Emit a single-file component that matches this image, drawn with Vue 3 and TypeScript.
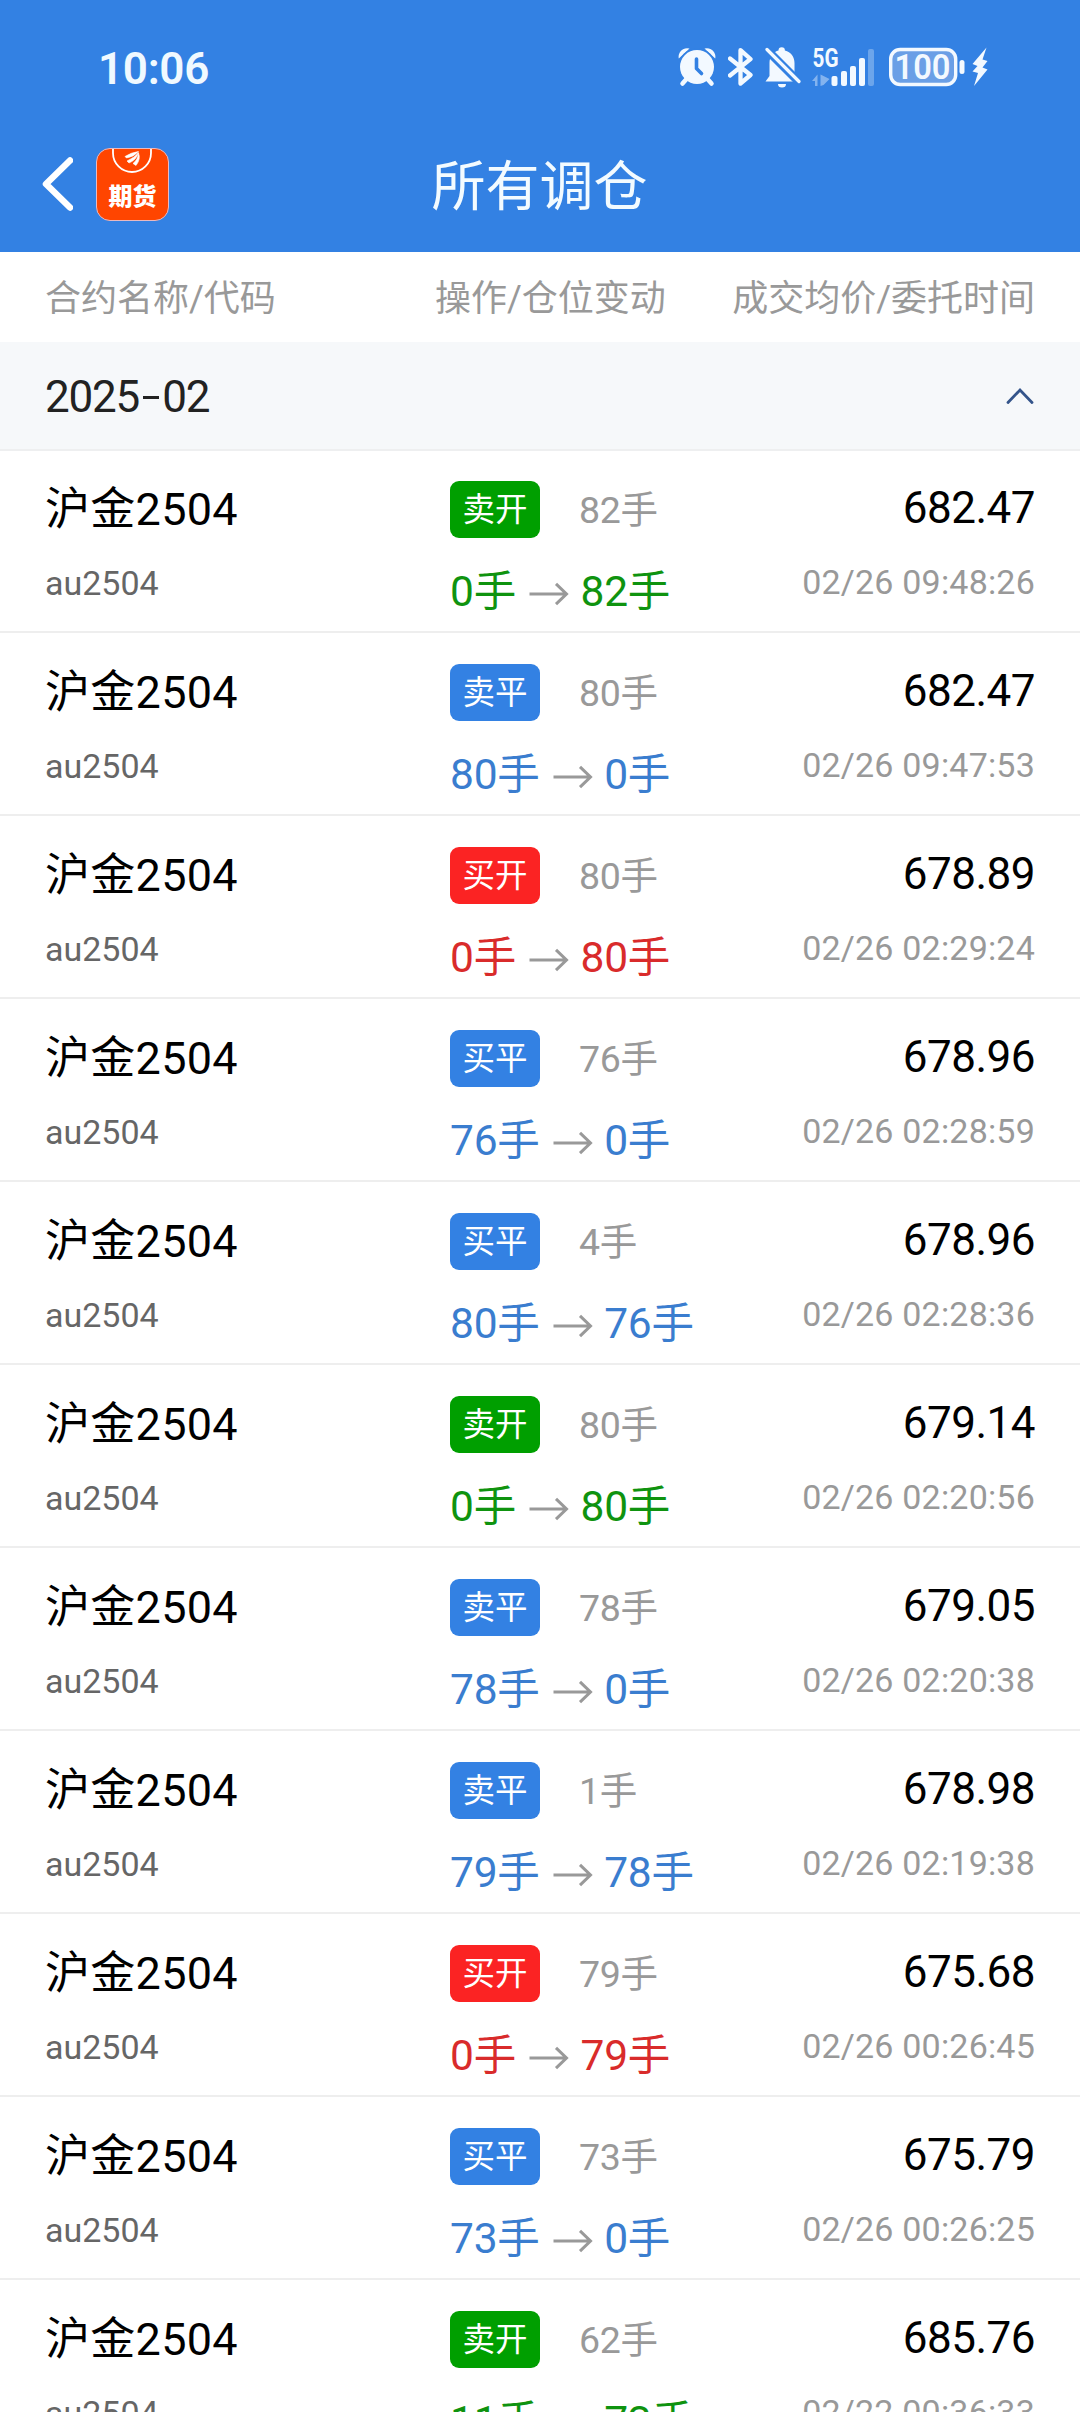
<script setup lang="ts">
type Kind = 'sell-open' | 'close' | 'buy-open'

interface Trade {
  label: string
  kind: Kind
  qty: number
  from: number
  to: number
  price: string
  time: string
}

const trades: Trade[] = [
  { label: '卖开', kind: 'sell-open', qty: 82, from: 0, to: 82, price: '682.47', time: '02/26 09:48:26' },
  { label: '卖平', kind: 'close', qty: 80, from: 80, to: 0, price: '682.47', time: '02/26 09:47:53' },
  { label: '买开', kind: 'buy-open', qty: 80, from: 0, to: 80, price: '678.89', time: '02/26 02:29:24' },
  { label: '买平', kind: 'close', qty: 76, from: 76, to: 0, price: '678.96', time: '02/26 02:28:59' },
  { label: '买平', kind: 'close', qty: 4, from: 80, to: 76, price: '678.96', time: '02/26 02:28:36' },
  { label: '卖开', kind: 'sell-open', qty: 80, from: 0, to: 80, price: '679.14', time: '02/26 02:20:56' },
  { label: '卖平', kind: 'close', qty: 78, from: 78, to: 0, price: '679.05', time: '02/26 02:20:38' },
  { label: '卖平', kind: 'close', qty: 1, from: 79, to: 78, price: '678.98', time: '02/26 02:19:38' },
  { label: '买开', kind: 'buy-open', qty: 79, from: 0, to: 79, price: '675.68', time: '02/26 00:26:45' },
  { label: '买平', kind: 'close', qty: 73, from: 73, to: 0, price: '675.79', time: '02/26 00:26:25' },
  { label: '卖开', kind: 'sell-open', qty: 62, from: 11, to: 73, price: '685.76', time: '02/22 00:36:33' },
]
</script>

<template>
  <div class="screen">
    <header class="top">
      <div class="status">
        <span class="clock">10:06</span>
        <div class="status-icons">
          <svg class="i-alarm" width="38" height="40" viewBox="0 0 38 40">
            <path d="M0.800 11.500A8.500 8.500 0 0 1 11.500 1.500zM26.500 1.500a8.500 8.500 0 0 1 10.700 10z" fill="#f3f9ff" />
            <circle cx="19" cy="20" r="18.800" fill="#3381e3" />
            <path d="M9 31.500l-4.500 5M29 31.500l4.500 5" stroke="#f3f9ff" stroke-width="4.500" stroke-linecap="round" />
            <circle cx="19" cy="20" r="17" fill="#f3f9ff" />
            <path d="M18.500 12v9.500l5 5" fill="none" stroke="#3381e3" stroke-width="3.600" stroke-linecap="round" stroke-linejoin="round" />
          </svg>
          <svg class="i-bt" width="26" height="40" viewBox="0 0 26 40">
            <path d="M2 11.500L22.500 28 12.500 36.500V3.200L22.500 12 2 28.500" fill="none" stroke="#f3f9ff" stroke-width="4.300" stroke-linecap="round" stroke-linejoin="round" />
          </svg>
          <svg class="i-bell" width="36" height="42" viewBox="0 0 36 42">
            <path d="M0.500 34.500L4.500 29V16C4.500 9 9 4.500 13.500 3.500a3.200 3.200 0 0 1 6.400 0C26 5 29.500 10 29.500 16v13l4 5.500z" fill="#f3f9ff" />
            <path d="M13 37h8a4 3.600 0 0 1-8 0z" fill="#f3f9ff" />
            <path d="M0 1L34.500 35.500" stroke="#3381e3" stroke-width="8.500" />
            <path d="M2 2.500L34 34.500" stroke="#f3f9ff" stroke-width="3.200" stroke-linecap="round" />
          </svg>
          <svg class="i-signal" width="64" height="42" viewBox="0 0 64 42">
            <text x="0.500" y="19" textLength="26" lengthAdjust="spacingAndGlyphs" class="net">5G</text>
            <path d="M0 33l5.500-6.500V38H3v-5zM8.500 26.500V38l3-1 6-6z" fill="#f3f9ff" opacity=".42" />
            <rect x="19.500" y="28" width="6" height="10" rx="2" fill="#f3f9ff" />
            <rect x="29" y="23" width="6" height="15" rx="2" fill="#f3f9ff" />
            <rect x="38" y="18" width="6" height="20" rx="2" fill="#f3f9ff" />
            <rect x="47" y="10" width="6" height="28" rx="2" fill="#f3f9ff" />
            <rect x="56" y="1" width="6" height="37" rx="2" fill="#f3f9ff" opacity=".3" />
          </svg>
          <svg class="i-battery" width="77" height="40" viewBox="0 0 77 40">
            <rect x="1.700" y="2.500" width="65" height="35" rx="9.500" fill="#6a9fe6" stroke="#f3f9ff" stroke-width="3.400" />
            <text x="5.500" y="32.300" textLength="56" lengthAdjust="spacingAndGlyphs" class="pct">100</text>
            <rect x="70.500" y="13" width="5" height="14" rx="2.500" fill="#f3f9ff" />
          </svg>
          <svg class="i-bolt" width="16" height="40" viewBox="0 0 16 40">
            <path d="M14.500 0.500L0.500 17l5 2L0.500 24.500l5.500 1.500L2 39 15.500 22.500l-5-2 5-6.500-5-1.500z" fill="#f3f9ff" />
          </svg>
        </div>
      </div>
      <div class="nav">
        <svg class="back" width="32" height="56" viewBox="0 0 32 56">
          <path d="M29 4.500L5 28l24 23.500" fill="none" stroke="#fff" stroke-width="6.500" stroke-linecap="round" stroke-linejoin="round" />
        </svg>
        <div class="logo">
          <svg class="logo-mark" width="70" height="70" viewBox="0 0 70 70">
            <path d="M16 0v4a19 19 0 0 0 38 0V0" fill="none" stroke="#fff" stroke-width="1.800" />
            <path d="M28 7.500q6-4 13.500-5-5 5.500-12 6.500zM30 12q7-3 11.500-8.500-2 7.500-9.500 10.500zM36 14.500q5-4 5.500-10.500 2.500 6-2.500 12.500z" fill="#fff" stroke="#fff" stroke-width="0.600" />
          </svg>
          <span class="logo-text">期货</span>
        </div>
        <h1 class="title">所有调仓</h1>
      </div>
    </header>

    <div class="columns">
      <span class="c-name">合约名称/代码</span>
      <span class="c-op">操作/仓位变动</span>
      <span class="c-price">成交均价/委托时间</span>
    </div>

    <div class="group">
      <span class="month">2025<i class="dash"></i>02</span>
      <svg width="28" height="18" viewBox="0 0 28 18">
        <path d="M2 15.500L14 3l12 12.500" fill="none" stroke="#34548a" stroke-width="2.800" stroke-linecap="round" />
      </svg>
    </div>

    <ul class="list">
      <li v-for="(t, i) in trades" :key="i" class="row">
        <div class="instrument">
          <span class="name">沪金2504</span>
          <span class="code">au2504</span>
        </div>
        <div class="operation" :class="t.kind">
          <div class="action">
            <span class="badge">{{ t.label }}</span>
            <span class="qty">{{ t.qty }}手</span>
          </div>
          <div class="change">
            <span>{{ t.from }}手</span>
            <svg class="arrow" width="40" height="24" viewBox="0 0 40 24">
              <path d="M0.500 12H37M27 1.800L37.500 12 27 22.200" fill="none" stroke="#999" stroke-width="3" />
            </svg>
            <span>{{ t.to }}手</span>
          </div>
        </div>
        <div class="deal">
          <span class="price">{{ t.price }}</span>
          <span class="time">{{ t.time }}</span>
        </div>
      </li>
    </ul>
  </div>
</template>

<style>
body {
  margin: 0;
  overflow: hidden;
}
</style>

<style scoped>
.screen {
  width: 1080px;
  height: 2412px;
  overflow: hidden;
  background: #fff;
  font-family: Roboto, "Noto Sans CJK SC", sans-serif;
  color: #000;
}
.top {
  height: 252px;
  background: #3381e3;
  color: #fff;
}
.status {
  display: flex;
  justify-content: space-between;
  height: 136px;
  padding: 0 92px 0 98px;
}
.clock {
  margin-top: 43px;
  font-size: 44px;
  line-height: 52px;
  font-weight: 600;
  letter-spacing: -0.300px;
  color: #f0f9ff;
}
.status-icons {
  display: flex;
  align-items: flex-start;
  padding-top: 47px;
}
.status-icons svg {
  display: block;
  flex: none;
}
.i-bt { margin-left: 12px; }
.i-bell { margin-left: 11px; overflow: hidden; }
.i-signal { margin-left: 11px; margin-top: 1px; overflow: visible; }
.i-battery { margin-left: 13px; overflow: visible; }
.i-bolt { margin-left: 6px; }
.net {
  font: 700 25px/30px Roboto, sans-serif;
  fill: #f3f9ff;
}
.pct {
  font: 600 35px/40px Roboto, sans-serif;
  fill: #f3f9ff;
}
.nav {
  display: grid;
  grid-template-columns: 32px 73px 1fr 170px;
  column-gap: 23px;
  align-items: center;
  height: 96px;
  padding: 0 0 0 41px;
}
.logo {
  display: flex;
  justify-content: center;
  align-items: flex-end;
  position: relative;
  box-sizing: border-box;
  width: 73px;
  height: 73px;
  border: 1.500px solid #e9b9c0;
  border-radius: 14px;
  background: #ff4500;
  overflow: hidden;
}
.logo-mark {
  position: absolute;
  top: 0;
  left: 0;
}
.logo-text {
  padding-bottom: 7px;
  font-size: 24px;
  line-height: 32px;
  font-weight: 900;
}
.title {
  margin: 7px 0 0;
  font-size: 54px;
  line-height: 72px;
  font-weight: 400;
  text-align: center;
  color: #f3fbff;
}
.columns {
  display: flex;
  height: 90px;
  box-sizing: border-box;
  padding: 0 45px;
  font-size: 36px;
  line-height: 94px;
  color: #999;
  white-space: nowrap;
}
.c-name { width: 390px; }
.c-op { flex: 1; }
.group {
  display: flex;
  align-items: center;
  justify-content: space-between;
  box-sizing: border-box;
  height: 109px;
  padding: 0 46px 0 45px;
  border-bottom: 2px solid #eeeff0;
  background: #f6f8fa;
}
.month {
  display: flex;
  align-items: center;
  margin-top: 2px;
  font-size: 44px;
  line-height: 52px;
  letter-spacing: -1.200px;
  color: #222;
}
.dash {
  width: 16px;
  height: 3px;
  margin: 2px 3px 0 4px;
  background: #222;
}
.list {
  margin: 0;
  padding: 0;
  list-style: none;
}
.row {
  display: flex;
  box-sizing: border-box;
  height: 183px;
  padding: 31px 45px 0;
  border-bottom: 2px solid #eee;
  white-space: nowrap;
}
.row:first-child {
  height: 182px;
  padding-top: 30px;
}
.instrument {
  display: flex;
  flex-direction: column;
  width: 405px;
}
.name {
  font-size: 45px;
  line-height: 57px;
  letter-spacing: 0.300px;
}
.code {
  margin-top: 23px;
  font-size: 34px;
  line-height: 44px;
  color: #666;
}
.operation {
  flex: 1;
}
.action {
  display: flex;
  gap: 39px;
}
.badge {
  width: 90px;
  height: 57px;
  border-radius: 9px;
  font-size: 32.500px;
  line-height: 58px;
  text-align: center;
  color: #fff;
}
.qty {
  height: 57px;
  font-size: 37.500px;
  line-height: 59px;
  letter-spacing: -0.300px;
  color: #999;
}
.change {
  display: flex;
  align-items: center;
  height: 58px;
  margin-top: 25px;
  font-size: 42.500px;
  line-height: 58px;
  letter-spacing: -0.200px;
}
.arrow {
  margin: 4px 11.500px 0 13px;
}
.sell-open .badge { background: #009f00; }
.sell-open .change { color: #0f930f; }
.close .badge { background: #3381e3; }
.close .change { color: #3a7dcf; }
.buy-open .badge { background: #fb2323; }
.buy-open .change { color: #d92b2b; }
.deal {
  display: flex;
  flex-direction: column;
  align-items: flex-end;
}
.price {
  font-size: 44px;
  line-height: 55px;
  letter-spacing: -0.500px;
}
.time {
  margin-top: 24px;
  font-size: 34px;
  line-height: 44px;
  letter-spacing: 0.200px;
  color: #999;
}
</style>
